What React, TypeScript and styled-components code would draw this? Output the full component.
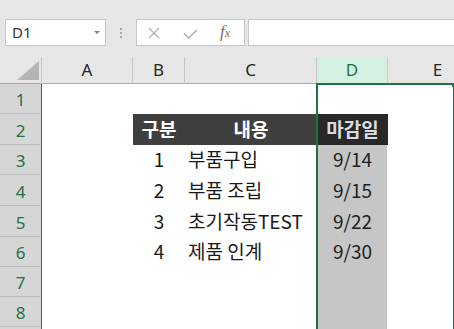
import React from "react";
import styled, { createGlobalStyle } from "styled-components";

const GREEN = "#217346";

const Global = createGlobalStyle`
  html, body { margin: 0; padding: 0; background: #ffffff; }
  body { font-family: "Noto Sans", sans-serif; }
`;

const Window = styled.div`
  width: 454px;
  height: 329px;
  overflow: hidden;
  background: #ffffff;
  display: flex;
  flex-direction: column;
`;

const FormulaBar = styled.div`
  flex: none;
  height: 57px;
  box-sizing: border-box;
  padding: 19px 0 0 5px;
  background: #e6e6e6;
  display: flex;
  align-items: flex-start;
`;

const NameBox = styled.div`
  width: 101px;
  height: 27px;
  box-sizing: border-box;
  background: #ffffff;
  border: 1px solid #c6c6c6;
  display: flex;
  align-items: center;
  justify-content: space-between;
  padding: 0 5px 1px 6px;
  font: 15px "Noto Sans", sans-serif;
  color: #333333;
`;

const DropArrow = styled.span`
  width: 0;
  height: 0;
  border-left: 3px solid transparent;
  border-right: 3px solid transparent;
  border-top: 3px solid #7a7a7a;
  margin-top: 1px;
`;

const Grip = styled.div`
  width: 30px;
  height: 27px;
  display: flex;
  flex-direction: column;
  align-items: center;
  justify-content: center;
  gap: 2px;
`;

const GripDot = styled.span`
  width: 2px;
  height: 2px;
  background: #a8a8a8;
`;

const FuncBox = styled.div`
  width: 109px;
  height: 27px;
  box-sizing: border-box;
  background: #ffffff;
  border: 1px solid #c6c6c6;
  display: flex;
  align-items: center;
  padding-left: 11px;
`;

const FuncIcon = styled.span<{ $gap: number }>`
  display: flex;
  align-items: center;
  margin-right: ${(p) => p.$gap}px;
`;

const Fx = styled.span`
  font: italic 17px "Liberation Serif", serif;
  color: #6e6e6e;
  line-height: 1;
  display: flex;
  align-items: baseline;
  margin-top: -2px;
  & > sub {
    font-size: 12px;
    vertical-align: baseline;
  }
`;

const FormulaInput = styled.div`
  flex: 1;
  height: 27px;
  box-sizing: border-box;
  margin: 0 -4px 0 3px;
  background: #ffffff;
  border: 1px solid #c6c6c6;
`;

const Sheet = styled.div`
  flex: 1;
  position: relative;
  display: grid;
  grid-template-columns: 42px 91px 52px 132px 71px 100px;
  grid-template-rows: 27px 30px 31px 30px 31px 31px 30px 30px 30px 30px;
`;

const Corner = styled.div`
  box-sizing: border-box;
  background: #e6e6e6;
  border-right: 1px solid #c6c6c6;
  border-bottom: 1px solid #ababab;
  display: flex;
  align-items: flex-end;
  justify-content: flex-end;
  padding: 0 2px 3px 0;
`;

const ColHead = styled.div<{ $active?: boolean }>`
  box-sizing: border-box;
  display: flex;
  align-items: center;
  justify-content: center;
  padding-bottom: 2px;
  background: ${(p) => (p.$active ? "#d3f0e0" : "#e6e6e6")};
  color: ${(p) => (p.$active ? GREEN : "#262626")};
  border-right: 1px solid ${(p) => (p.$active ? "#b9d9c6" : "#c6c6c6")};
  border-bottom: 1px solid #ababab;
  font: 17px "Noto Sans", sans-serif;
`;

const RowHead = styled.div`
  box-sizing: border-box;
  display: flex;
  align-items: center;
  justify-content: center;
  padding-top: 2px;
  background: #d6d6d6;
  color: ${GREEN};
  border-bottom: 1px solid #bcbcbc;
  border-right: 1px solid ${GREEN};
  font: 17px "Noto Sans", sans-serif;
`;

type Tone = "plain" | "band" | "bandSel" | "sel";

const toneBg: Record<Tone, string> = {
  plain: "transparent",
  band: "#3f3f3f",
  bandSel: "#282828",
  sel: "#c6c6c6",
};

const toneFg: Record<Tone, string> = {
  plain: "#1a1a1a",
  band: "#ffffff",
  bandSel: "#dadde3",
  sel: "#222222",
};

const Cell = styled.div<{ $tone?: Tone; $left?: boolean }>`
  box-sizing: border-box;
  min-width: 0;
  overflow: hidden;
  white-space: nowrap;
  display: flex;
  align-items: center;
  justify-content: ${(p) => (p.$left ? "flex-start" : "center")};
  padding: 0 0 3px ${(p) => (p.$left ? "3px" : "0")};
  font: ${(p) => (p.$tone === "band" || p.$tone === "bandSel" ? 700 : 400)} 19px
    "Noto Sans CJK KR", sans-serif;
  background: ${(p) => toneBg[p.$tone ?? "plain"]};
  color: ${(p) => toneFg[p.$tone ?? "plain"]};
  box-shadow: ${(p) => (p.$tone === "sel" ? "inset -1px 0 0 #ffffff" : "none")};
`;

/* absolutely positioned grid child: uses column D's area without taking part in auto-placement */
const SelectionFrame = styled.div`
  position: absolute;
  grid-column: 5;
  grid-row: 2 / -1;
  top: -1px;
  left: -1px;
  right: -1px;
  bottom: 0;
  border: 2px solid ${GREEN};
  border-bottom: none;
  pointer-events: none;
  z-index: 2;
  &::after {
    content: "";
    position: absolute;
    top: -2px;
    right: -3px;
    width: 4px;
    height: 4px;
    background: ${GREEN};
  }
`;

type Row = { n: number; header?: boolean; b?: string; c?: string; d?: string };

const rows: Row[] = [
  { n: 1 },
  { n: 2, header: true },
  { n: 3, b: "1", c: "부품구입", d: "9/14" },
  { n: 4, b: "2", c: "부품 조립", d: "9/15" },
  { n: 5, b: "3", c: "초기작동TEST", d: "9/22" },
  { n: 6, b: "4", c: "제품 인계", d: "9/30" },
  { n: 7 },
  { n: 8 },
  { n: 9 },
];

const cols = ["A", "B", "C", "D", "E"];

export default function App() {
  return (
    <Window>
      <Global />
      <FormulaBar>
        <NameBox>
          <span>D1</span>
          <DropArrow />
        </NameBox>
        <Grip>
          <GripDot />
          <GripDot />
          <GripDot />
        </Grip>
        <FuncBox>
          <FuncIcon $gap={23}>
            <svg width="12" height="12" viewBox="0 0 12 12">
              <path d="M1 1 L11 11 M11 1 L1 11" stroke="#b4b4b4" strokeWidth="1.4" fill="none" />
            </svg>
          </FuncIcon>
          <FuncIcon $gap={22}>
            <svg width="15" height="10" viewBox="0 0 15 10" style={{ marginTop: 3 }}>
              <path d="M1 4.5 L5.5 9 L14 1" stroke="#b4b4b4" strokeWidth="1.7" fill="none" />
            </svg>
          </FuncIcon>
          <Fx>
            f<sub>x</sub>
          </Fx>
        </FuncBox>
        <FormulaInput />
      </FormulaBar>
      <Sheet>
        <Corner>
          <svg width="22" height="19" viewBox="0 0 22 19">
            <polygon points="22,0 22,19 0,19" fill="#b5b5b5" />
          </svg>
        </Corner>
        {cols.map((c) => (
          <ColHead key={c} $active={c === "D"}>
            {c}
          </ColHead>
        ))}
        {rows.map((r) => (
          <React.Fragment key={r.n}>
            <RowHead>{r.n}</RowHead>
            <Cell />
            {r.header ? (
              <>
                <Cell $tone="band">구분</Cell>
                <Cell $tone="band">내용</Cell>
                <Cell $tone="bandSel">마감일</Cell>
              </>
            ) : (
              <>
                <Cell>{r.b}</Cell>
                <Cell $left>{r.c}</Cell>
                <Cell $tone={r.n === 1 ? "plain" : "sel"}>{r.d}</Cell>
              </>
            )}
            <Cell />
          </React.Fragment>
        ))}
        <SelectionFrame />
      </Sheet>
    </Window>
  );
}
